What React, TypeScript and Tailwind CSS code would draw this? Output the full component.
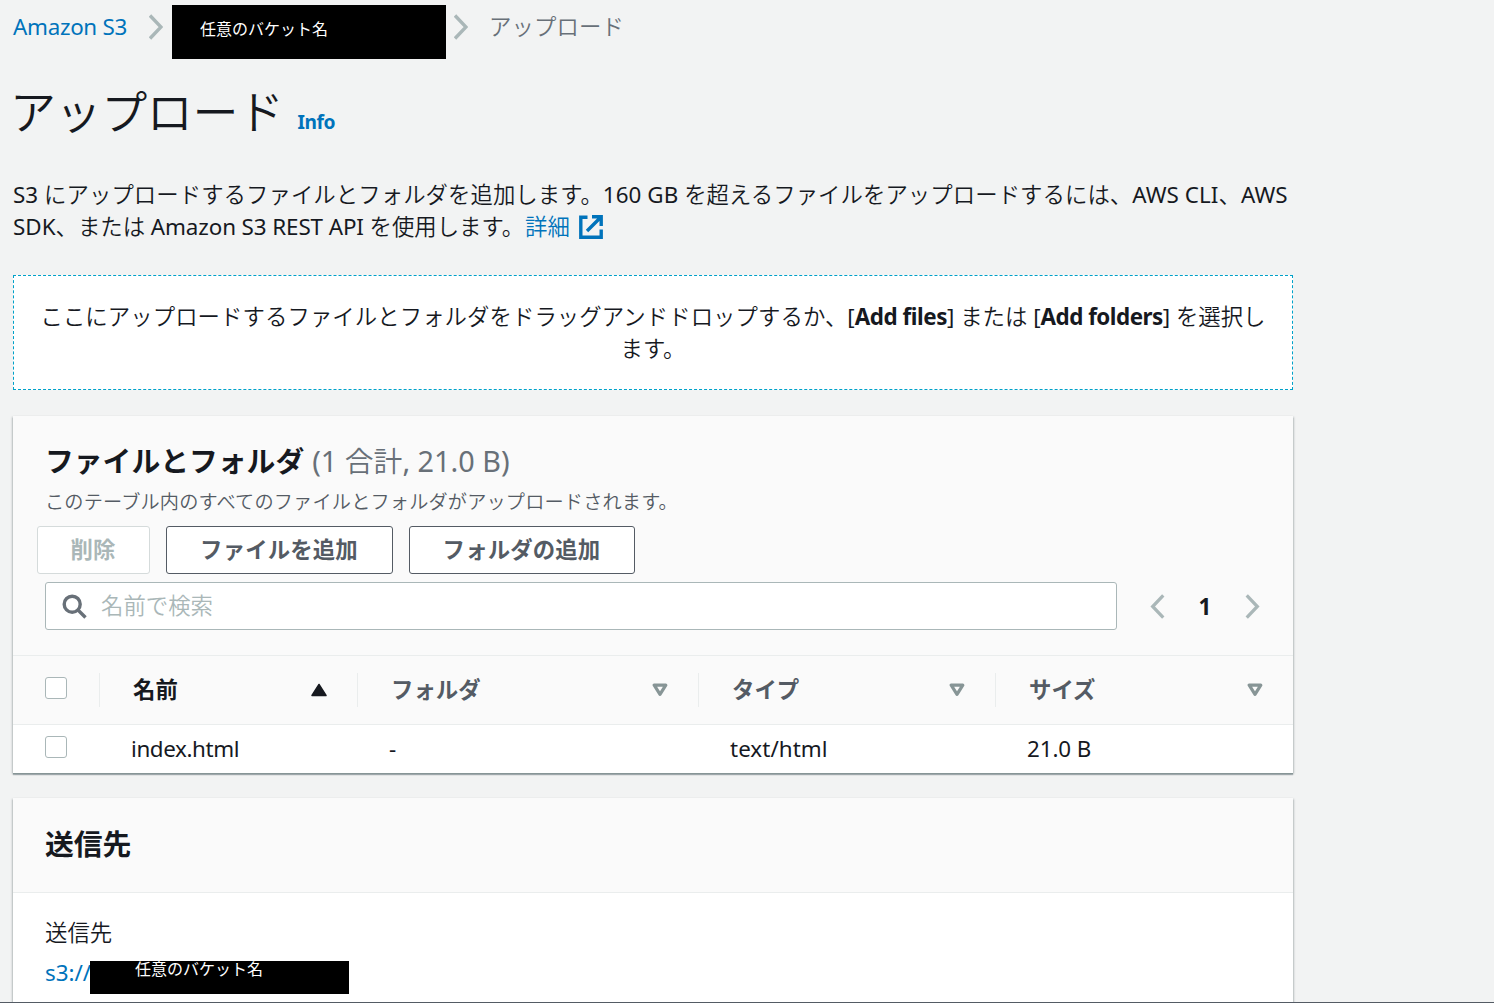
import type { ReactNode } from 'react'

const columns = [
  { label: '名前', value: 'index.html', width: 'w-[258px]', tracking: 'tracking-[-0.4px]', sorted: true },
  { label: 'フォルダ', value: '-', width: 'w-[341px]', tracking: '', sorted: false },
  { label: 'タイプ', value: 'text/html', width: 'w-[297px]', tracking: 'tracking-[0.05px]', sorted: false },
  { label: 'サイズ', value: '21.0 B', width: 'w-[298px]', tracking: 'tracking-[-0.1px]', sorted: false },
]

// Latin runs are set heavier than the Japanese text around them
function En({ children, className = '' }: { children: ReactNode; className?: string }) {
  return <span className={`font-normal ${className}`}>{children}</span>
}

function Chevron({ left = false, className = '' }: { left?: boolean; className?: string }) {
  return (
    <svg viewBox="0 0 14 26" className={`shrink-0 ${className}`} fill="none" stroke="#aab7b8" strokeWidth="3.4">
      <path d={left ? 'M13 1.5 2 13l11 11.5' : 'M1 1.5 12 13 1 24.5'} />
    </svg>
  )
}

function SortIcon({ sorted }: { sorted: boolean }) {
  if (sorted) {
    return (
      <svg viewBox="0 0 16 14" className="h-[14px] w-4" fill="#16191f" stroke="#16191f" strokeWidth="1.5" strokeLinejoin="round">
        <path d="M8 1.5 15 12.5H1Z" />
      </svg>
    )
  }
  return (
    <svg viewBox="0 0 16 14" className="h-[14px] w-4" fill="none" stroke="#879596" strokeWidth="3.2" strokeLinejoin="round">
      <path d="M2.2 2.2h11.6L8 11.4Z" />
    </svg>
  )
}

function Checkbox() {
  return <span className="block size-[22px] rounded-[3px] border-[1.5px] border-[#aab7b8] bg-white" />
}

function Breadcrumbs() {
  return (
    <nav className="flex h-[59px] items-start whitespace-nowrap">
      <a className="w-[136px] pt-[11px] text-[22.4px] leading-8 text-[#0073bb]">
        <En className="tracking-[-0.3px]">Amazon S3</En>
      </a>
      <Chevron className="mt-[14px] h-[26px] w-[14px]" />
      <div className="mt-[5px] ml-[9px] h-[54px] w-[274px] bg-black pt-3 pl-7 text-base leading-6 font-normal text-white">
        任意のバケット名
      </div>
      <Chevron className="mt-[14px] ml-2 h-[26px] w-[14px]" />
      <span className="ml-[21px] pt-[11px] text-[22.4px] leading-8 tracking-[0.1px] text-[#687078]">アップロード</span>
    </nav>
  )
}

function FilesCard() {
  return (
    <section className="mt-[26px] h-[357px] bg-white shadow-[0_1px_0_0_#879596,0_2px_1px_0_rgba(0,28,36,0.25),1px_1px_2px_0_rgba(0,28,36,0.2),-1px_1px_2px_0_rgba(0,28,36,0.2)]">
      <div className="h-[240px] border-b border-[#eaeded] bg-[#fafafa] pt-[22px]">
        <h2 className="pl-8 text-[28.8px] leading-[45px] whitespace-nowrap">
          <span className="font-bold">ファイルとフォルダ</span>
          <span className="ml-2 text-[#687078]">
            <En>(1 </En>合計<En>, 21.0 B)</En>
          </span>
        </h2>
        <p className="pt-px pl-8 text-[19.2px] leading-9 tracking-[0.15px] text-[#545b64]">
          このテーブル内のすべてのファイルとフォルダがアップロードされます。
        </p>
        <div className="mt-[6px] flex gap-4 pl-6 text-[22.4px] font-bold tracking-[0.15px] text-[#545b64]">
          <button className="h-12 w-[113px] rounded-[3px] border border-[#d5dbdb] bg-white pr-px pb-px text-[#aab7b8]">削除</button>
          <button className="h-12 w-[227px] rounded-[3px] border border-[#545b64] bg-white pr-px pb-px">ファイルを追加</button>
          <button className="h-12 w-[226px] rounded-[3px] border border-[#545b64] bg-white pr-px pb-px">フォルダの追加</button>
        </div>
        <div className="mt-2 flex items-center pl-8">
          <div className="flex h-12 w-[1072px] items-center rounded-[3px] border border-[#aab7b8] bg-white pl-4">
            <svg viewBox="0 0 26 26" className="mt-[2px] size-[26px]" fill="none" stroke="#687078" strokeWidth="3.4">
              <circle cx="10.2" cy="10.2" r="8" />
              <path d="m16 16 7.5 7.5" />
            </svg>
            <span className="ml-[13px] text-[22.4px] text-[#aab7b8]">名前で検索</span>
          </div>
          <Chevron left className="mt-px ml-8 h-[25px] w-[17px]" />
          <span className="w-[78px] pt-px text-center text-[22.4px] font-bold">1</span>
          <Chevron className="mt-px h-[25px] w-[17px]" />
        </div>
      </div>
      <div className="flex h-[69px] items-center border-b border-[#eaeded] bg-[#fafafa]">
        <div className="w-[86px] pb-[4px] pl-8">
          <Checkbox />
        </div>
        {columns.map(c => (
          <div
            key={c.label}
            className={`mb-px flex h-[34px] items-center justify-between border-l border-[#eaeded] pr-[30px] pl-[33px] text-[22.4px] font-bold ${c.width} ${c.sorted ? 'text-[#16191f]' : 'text-[#545b64]'}`}
          >
            {c.label}
            <SortIcon sorted={c.sorted} />
          </div>
        ))}
      </div>
      <div className="flex h-12 items-center">
        <div className="w-[86px] pb-[4px] pl-8">
          <Checkbox />
        </div>
        {columns.map(c => (
          <div key={c.label} className={`pl-8 text-[22.4px] ${c.width}`}>
            <En className={c.tracking}>{c.value}</En>
          </div>
        ))}
      </div>
    </section>
  )
}

function DestinationCard() {
  return (
    <section className="mt-[25px] h-[300px] bg-white shadow-[0_1px_0_0_#879596,0_2px_1px_0_rgba(0,28,36,0.25),1px_1px_2px_0_rgba(0,28,36,0.2),-1px_1px_2px_0_rgba(0,28,36,0.2)]">
      <div className="flex h-[95px] items-center border-b border-[#eaeded] bg-[#fafafa] pb-[3px] pl-8">
        <h2 className="text-[28.8px] font-bold">送信先</h2>
      </div>
      <div className="pt-6 pl-8 text-[22.4px] leading-8">
        <p>送信先</p>
        <div className="mt-3 flex">
          <span className="-mt-1 w-[45px] overflow-hidden whitespace-nowrap text-[#0073bb]">
            <En>s3://</En>
          </span>
          <span className="h-[33px] w-[259px] bg-black pl-[45px] text-base leading-4 font-normal text-white">任意のバケット名</span>
        </div>
      </div>
    </section>
  )
}

export default function App() {
  return (
    <div className="h-[1003px] overflow-hidden border-b border-[#545b64] bg-[#f2f3f3] font-['Noto_Sans','Noto_Sans_CJK_JP',sans-serif] font-[350] text-[#16191f]">
      <main className="ml-[13px] w-[1280px]">
        <Breadcrumbs />
        <h1 className="flex h-[120px] items-baseline pt-[18px] text-[46px] leading-[68px] tracking-[-0.4px] whitespace-nowrap">
          <span className="-ml-[3px]">アップロード</span>
          <a className="ml-[14px] text-[19.2px] font-bold tracking-[-0.5px] text-[#0073bb]">Info</a>
        </h1>
        <p className="h-16 text-[22.4px] leading-8 whitespace-nowrap">
          <span className="tracking-[0.05px]">
            <En>S3 </En>にアップロードするファイルとフォルダを追加します。<En>160 GB </En>
            を超えるファイルをアップロードするには、<En>AWS CLI</En>、<En>AWS</En>
          </span>
          <br />
          <En>SDK</En>、または<En className="tracking-[-0.1px]"> Amazon S3 REST API </En>を使用します。
          <a className="ml-px text-[#0073bb]">
            詳細
            <svg viewBox="0 0 24 24" className="ml-[9px] inline size-6 align-[-4px]" fill="none" stroke="#0073bb" strokeWidth="3.4">
              <path d="M8.5 2.2H1.8v20h20.4V14.5M13 1.8h9.2V11M21.5 2.5 8 16" />
            </svg>
          </a>
        </p>
        <div className="mt-8 h-[115px] border border-dashed border-[#00a1c9] bg-white pt-[25px] text-center text-[22.4px] leading-8 whitespace-nowrap">
          <span className="tracking-[0.06px]">ここにアップロードするファイルとフォルダをドラッグアンドドロップするか、</span>
          <En>[</En>
          <b className="font-bold tracking-[-0.45px]">Add files</b>
          <En>] </En>または<En> [</En>
          <b className="font-bold tracking-[-0.5px]">Add folders</b>
          <En>] </En>を選択し
          <br />
          ます。
        </div>
        <FilesCard />
        <DestinationCard />
      </main>
    </div>
  )
}
